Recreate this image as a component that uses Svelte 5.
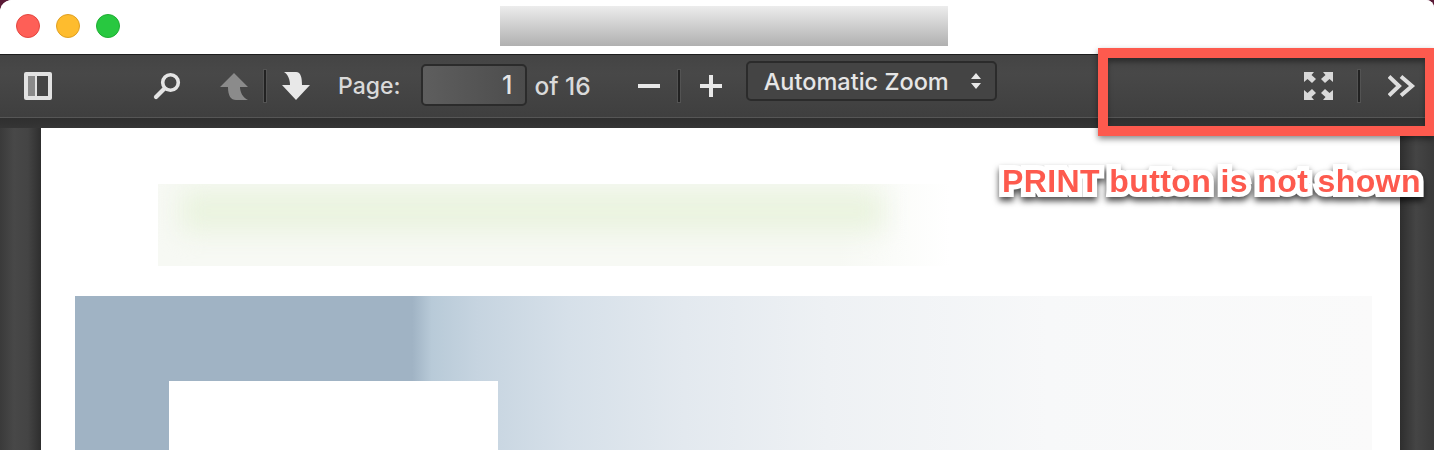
<script>
	const pageLabel = 'Page:';
</script>

<div class="window">
	<header class="titlebar">
		<div class="lights">
			<span class="light red"></span>
			<span class="light yellow"></span>
			<span class="light green"></span>
		</div>
		<div class="title-blur"></div>
	</header>

	<div class="toolbar">
		<button class="tool sidebar" aria-label="Toggle sidebar">
			<svg width="28" height="28" viewBox="0 0 28 28">
				<rect x="0" y="0" width="28" height="28" rx="2" fill="#e2e2e2" />
				<rect x="4" y="4" width="7" height="20" fill="#8a8a8a" />
				<rect x="13" y="4" width="11" height="20" fill="#454545" />
			</svg>
		</button>

		<button class="tool search" aria-label="Find">
			<svg width="28" height="28" viewBox="0 0 28 28">
				<circle cx="17.5" cy="10.5" r="7.8" fill="none" stroke="#e4e4e4" stroke-width="3.6" />
				<path d="M11 17 L3 25" fill="none" stroke="#e4e4e4" stroke-width="4.2" stroke-linecap="round" />
			</svg>
		</button>

		<button class="tool up" aria-label="Previous page">
			<svg width="28" height="28" viewBox="0 0 28 28">
				<path d="M14 1 L28 15 H20 C20 20 23 26 28 28 H16 C11 28 8 24 8 15 H0 Z" fill="#8b8b8b" />
			</svg>
		</button>
		<span class="sep sep-nav"></span>
		<button class="tool down" aria-label="Next page">
			<svg width="28" height="28" viewBox="0 0 28 28">
				<path d="M2 0 H14 C19 0 20 6 20 13 H28 L14 28 L0 13 H8 C8 8 6 2 2 0 Z" fill="#e8e8e8" />
			</svg>
		</button>

		<span class="label page-label">{pageLabel}</span>
		<div class="page-input">1</div>
		<span class="label page-count">of 16</span>

		<button class="tool minus" aria-label="Zoom out">
			<svg width="22" height="22" viewBox="0 0 22 22"><rect y="9" width="22" height="4" fill="#e8e8e8" /></svg>
		</button>
		<span class="sep sep-zoom"></span>
		<button class="tool plus" aria-label="Zoom in">
			<svg width="22" height="22" viewBox="0 0 22 22">
				<rect y="9" width="22" height="4" fill="#e8e8e8" />
				<rect x="9" width="4" height="22" fill="#e8e8e8" />
			</svg>
		</button>

		<div class="zoom-select">
			<span>Automatic Zoom</span>
			<svg width="12" height="16" viewBox="0 0 12 16">
				<path d="M6 0 L11 6 H1 Z M1 10 H11 L6 16 Z" fill="#e8e8e8" />
			</svg>
		</div>

		<button class="tool fullscreen" aria-label="Presentation mode">
			<svg width="29" height="28" viewBox="0 0 29 28" fill="#d8d8d8">
				<path d="M0 0 H10 L7.5 3 L12 7 L8 11 L3.5 7 L0 10 Z" />
				<path d="M29 0 H19 L21.5 3 L17 7 L21 11 L25.5 7 L29 10 Z" />
				<path d="M0 28 V18 L3.5 21 L8 17 L12 21 L7.5 25 L10 28 Z" />
				<path d="M29 28 V18 L25.5 21 L21 17 L17 21 L21.5 25 L19 28 Z" />
			</svg>
		</button>
		<span class="sep sep-tools"></span>
		<button class="tool more" aria-label="Tools">
			<svg width="28" height="24" viewBox="0 0 28 24">
				<path d="M1 2.5 L11 12 L1 21.5 M13 2.5 L24 12 L13 21.5" fill="none" stroke="#dedede" stroke-width="4" />
			</svg>
		</button>
	</div>
	<div class="toolbar-shadow"></div>

	<main class="viewer">
		<div class="page">
			<div class="banner"><div class="banner-glow"></div></div>
			<div class="hero">
				<div class="hero-box"></div>
			</div>
		</div>
	</main>

	<div class="callout"></div>
	<div class="callout-text">PRINT button is not shown</div>
</div>

<style>
	:global(body) {
		margin: 0;
		background: #5a1a36;
	}

	.window {
		position: relative;
		width: 1434px;
		height: 450px;
		overflow: hidden;
		border-radius: 12px 8px 0 0;
		background: #fff;
		font-family: Inter, "Liberation Sans", sans-serif;
	}

	.titlebar {
		display: flex;
		align-items: flex-start;
		height: 54px;
		background: #fff;
		border-bottom: 1px solid #1e1e1e;
	}

	.lights {
		display: flex;
		gap: 16px;
		padding: 14px 0 0 16px;
	}

	.light {
		width: 24px;
		height: 24px;
		border-radius: 50%;
		box-sizing: border-box;
	}

	.red {
		background: #fe5f57;
		border: 1px solid #e4463f;
	}

	.yellow {
		background: #febc2e;
		border: 1px solid #e0a022;
	}

	.green {
		background: #28c840;
		border: 1px solid #1fae33;
	}

	.title-blur {
		width: 448px;
		height: 40px;
		margin: 6px 0 0 380px;
		background: linear-gradient(#ececec, #b0b0b0);
	}

	.toolbar {
		display: flex;
		align-items: center;
		height: 62px;
		background: linear-gradient(#444, #484848 30%, #3f3f3f);
		border-bottom: 1px solid #565656;
		color: #e6e6e6;
	}

	.toolbar-shadow {
		height: 10px;
		background: linear-gradient(#2f2f2f, #353535);
	}

	.tool {
		display: flex;
		align-items: center;
		justify-content: center;
		padding: 0;
		border: 0;
		background: none;
	}

	.sidebar { margin-left: 24px; }
	.search { margin-left: 101px; }
	.up { margin-left: 39px; }
	.down { margin-left: 16px; }
	.minus { margin-left: 47px; }
	.plus { margin-left: 20px; }
	.fullscreen { margin-left: 307px; }
	.more { margin-left: 28px; }

	.sep {
		flex: none;
		width: 2px;
		height: 32px;
		background: #222;
		box-shadow: 0 0 0 1px #535353;
	}

	.sep-nav { margin-left: 16px; }
	.sep-zoom { margin-left: 18px; }
	.sep-tools { margin-left: 25px; }

	.label {
		font-size: 23px;
		font-weight: 500;
		color: #dadada;
	}

	.page-label { margin-left: 28px; }
	.page-count {
		margin-left: 7px;
		font-size: 24.5px;
	}

	.page-input {
		box-sizing: border-box;
		width: 106px;
		height: 42px;
		margin: -2px 0 0 21px;
		padding-right: 13px;
		font-size: 25px;
		font-weight: 500;
		line-height: 38px;
		text-align: right;
		background: linear-gradient(90deg, #5e5e5e, #4c4c4c);
		border: 2px solid #2b2b2b;
		border-radius: 5px;
	}

	.zoom-select {
		display: flex;
		align-items: center;
		justify-content: space-between;
		box-sizing: border-box;
		width: 251px;
		height: 40px;
		margin: -10px 0 0 24px;
		padding: 0 13px 0 16px;
		font-size: 23.5px;
		font-weight: 500;
		background: #444;
		border: 2px solid #2b2b2b;
		border-radius: 5px;
	}

	.viewer {
		height: 322px;
		padding: 0 34px 0 41px;
		background: linear-gradient(
			90deg,
			#3a3a3a 0,
			#484848 14px,
			#444 28px,
			#2e2e2e 41px,
			#2e2e2e 1400px,
			#454545 1416px,
			#3a3a3a 1434px
		);
	}

	.page {
		height: 322px;
		padding: 56px 28px 0 34px;
		box-sizing: border-box;
		background: #fff;
	}

	.banner {
		width: 792px;
		height: 82px;
		margin-left: 83px;
		padding: 6px 66px 0 22px;
		box-sizing: border-box;
		overflow: hidden;
		background: linear-gradient(90deg, #f7f9f4 86%, #fff 100%);
	}

	.banner-glow {
		height: 42px;
		background: #eaf3df;
		filter: blur(13px);
	}

	.hero {
		height: 154px;
		margin-top: 30px;
		padding: 85px 0 0 94px;
		box-sizing: border-box;
		background: linear-gradient(
			90deg,
			#a0b3c4 0 26%,
			#b8cad8 27.5%,
			#c6d4e0 31%,
			#d6e0e9 38%,
			#e3e9ef 47%,
			#eef1f4 58%,
			#f7f8f9 75%,
			#fafafa 100%
		);
	}

	.hero-box {
		width: 329px;
		height: 69px;
		background: #fff;
	}

	/* annotation drawn over the screenshot */
	.callout {
		position: absolute;
		left: 1098px;
		top: 48px;
		box-sizing: border-box;
		width: 336px;
		height: 88px;
		border: 10px solid #fd5a4e;
		border-right-width: 9px;
		box-shadow: 0 3px 6px rgba(0, 0, 0, 0.45), inset 0 4px 5px rgba(0, 0, 0, 0.35);
	}

	.callout-text {
		position: absolute;
		left: 1002px;
		top: 162px;
		font-family: "Liberation Sans", Arial, sans-serif;
		font-size: 32px;
		font-weight: 700;
		line-height: 38px;
		letter-spacing: 0.4px;
		white-space: nowrap;
		color: #fd5a4e;
		-webkit-text-stroke: 10px #fff;
		paint-order: stroke fill;
		filter: drop-shadow(0 4px 3px rgba(0, 0, 0, 0.7));
	}
</style>
